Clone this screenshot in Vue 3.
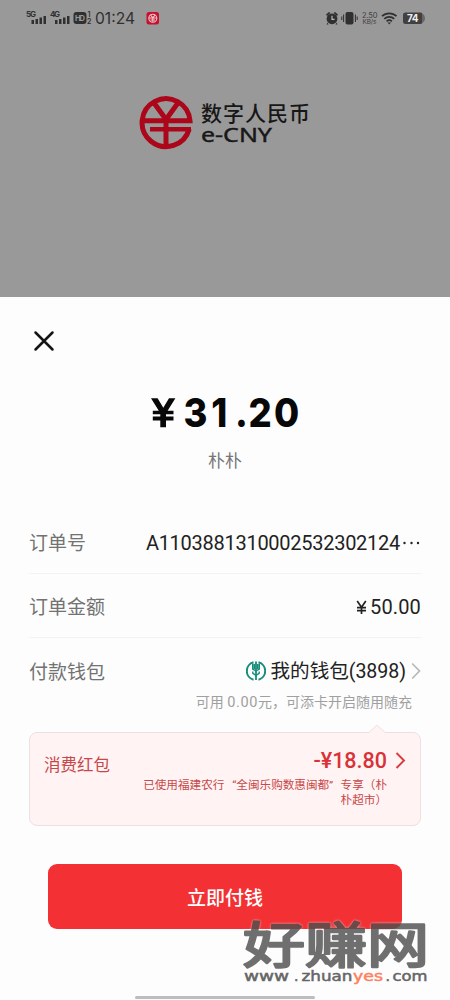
<script setup>
const signal = [4, 5, 6.5, 8]
const rows = [
  { label: '订单号', value: 'A1103881310002532302124', more: true },
  { label: '订单金额', value: '50.00', yen: true },
]
</script>

<template>
  <main class="screen">
    <header class="backdrop">
      <div class="status">
        <svg class="status-left" width="160" height="36" viewBox="0 0 160 36">
          <g class="ink">
            <text x="26" y="17" class="net" textLength="10">5G</text>
            <text x="50" y="17" class="net" textLength="10">4G</text>
            <rect v-for="(h, i) in signal" :key="'a' + i" :x="31.5 + i * 4" :y="24 - h" width="2.5" :height="h" />
            <rect v-for="(h, i) in signal" :key="'b' + i" :x="55 + i * 4" :y="24 - h" width="2.5" :height="h" />
            <rect x="73.5" y="12" width="13" height="12" rx="3" />
            <text x="75" y="20.8" class="hd" textLength="10">HD</text>
            <text x="87.500" y="16.8" class="sim">1</text>
            <text x="87" y="24.2" class="sim">2</text>
            <text x="95" y="24.4" class="clock" textLength="40" lengthAdjust="spacingAndGlyphs">01:24</text>
          </g>
          <rect x="146.500" y="12" width="12.500" height="12.500" rx="2.500" fill="#c8102e" />
          <g fill="none" stroke="#e9c9cd" stroke-width="1.100">
            <circle cx="152.800" cy="18.200" r="4" />
            <path d="M150.500 15.200l2.300 2.500 2.300-2.500M149 18h7.500M150.500 20h4.500M152.800 17.800v4" />
          </g>
        </svg>
        <svg class="status-right" width="110" height="36" viewBox="320 0 110 36">
          <g fill="#303030">
            <circle cx="332" cy="18.800" r="5.400" />
            <path d="M326 14.500l3-2.500 1.500 1-3.500 3zM338 14.500l-3-2.500-1.500 1 3.500 3z" />
            <path d="M327.500 22.500l-1 2h2zM336.500 22.500l1 2h-2z" />
            <rect x="345.500" y="12" width="8" height="12.500" rx="2" />
          </g>
          <path d="M332 15.800v3.500h2.500" fill="none" stroke="#bbb" stroke-width="1.200" />
          <path d="M343.600 14.500v7.500M341.800 16.500v3.500M355.400 14.500v7.500M357.200 16.500v3.500" stroke="#303030" stroke-width="1" />
          <text x="362" y="17.600" class="rate" textLength="15.500">2.50</text>
          <text x="362.500" y="24.300" class="rate unit" textLength="14">KB/s</text>
          <g fill="none" stroke="#303030" stroke-width="1.700">
            <path d="M382 16.200a10.500 10.500 0 0 1 14.500 0" />
            <path d="M384.300 18.900a7.200 7.200 0 0 1 9.900 0" />
            <path d="M386.600 21.400a4 4 0 0 1 5.300 0" />
          </g>
          <path d="M387.500 22.500h3.500l-1.750 2z" fill="#303030" />
          <path d="M405.500 12.500h15q2 0 2 2v7.500q0 2-2 2h-15q-2.500 0-2.500-2.500v-6.500q0-2.500 2.500-2.500z" fill="#404040" />
          <path d="M422.500 13.500q2.500 1.500 2.500 4.700t-2.500 4.700z" fill="#666" />
          <text x="407" y="22.200" class="battery" textLength="11.500">74</text>
        </svg>
      </div>
      <svg class="brand" width="176" height="60" viewBox="138 92 176 60">
        <g fill="none" stroke="#ac061a">
          <path d="M189.200 129A24 24 0 1 1 190 120.800H142.500" stroke-width="5" />
          <path d="M153 101.500L166 119.500 179 101.500M166 119v26" stroke-width="5" />
          <path d="M150 129.200h41" stroke-width="4.600" />
        </g>
        <text x="201" y="121" class="brand-cn" textLength="109">数字人民币</text>
        <text x="201" y="141.500" class="brand-en" textLength="71" lengthAdjust="spacingAndGlyphs">e-CNY</text>
      </svg>
    </header>

    <section class="sheet">
      <button class="close" aria-label="关闭">
        <svg width="22" height="22" viewBox="0 0 22 22"><path d="M2.500 2.500l17 17M19.500 2.500l-17 17" stroke="#151515" stroke-width="2.500" stroke-linecap="round" /></svg>
      </button>
      <svg class="amount" width="164" height="60" viewBox="143 382 164 60">
        <path d="M151 398.300h6.600l5.700 9.500 5.700-9.500h6.400l-7.800 12.400h5.900v3.600h-7.500v2.300h7.500v3.800h-7.500v6.800h-5.700v-6.800h-7.500v-3.800h7.500v-2.300h-7.500v-3.600h6z" fill="#080808" />
        <text transform="translate(183.500 427.300) scale(.91 1)" x="0 30.500 56.500 71.500 99.500">31.20</text>
      </svg>
      <p class="merchant">朴朴</p>

      <div class="details">
        <div v-for="row in rows" :key="row.label" class="row">
          <span class="label">{{ row.label }}</span>
          <span class="value" :class="{ serial: row.more, money: row.yen }">
            <svg v-if="row.yen" class="yen" width="11" height="15" viewBox="0 0 11 15"><path d="M1.200 1l4.300 6.200L9.800 1M1 7.700h9M1 10.700h9M5.500 7v7" fill="none" stroke="#222" stroke-width="1.700" /></svg>{{ row.value }}<svg v-if="row.more" class="dots" width="20" height="4" viewBox="0 0 20 4"><g fill="#222"><circle cx="3.500" cy="2" r="1.200" /><circle cx="10.500" cy="2" r="1.200" /><circle cx="17" cy="2" r="1.200" /></g></svg>
          </span>
        </div>
        <div class="row wallet">
          <span class="label">付款钱包</span>
          <span class="value">
            <svg class="bank" width="20" height="20" viewBox="0 0 20 20">
              <g fill="none" stroke="#168c7b">
                <path d="M7.500 1.300A9 9 0 0 0 7.500 18.700M12.500 1.300A9 9 0 0 1 12.500 18.700" stroke-width="2" />
                <path d="M10 .5V19" stroke-width="1.800" />
                <path d="M6.700 2.500v5.500l3.300 2 3.300-2V2.500M8.300 3v5M11.700 3v5M6.800 10.500v1.800l3.200 2 3.200-2v-1.800" stroke-width="1.400" />
              </g>
            </svg>
            <span class="wallet-name">我的钱包(3898)</span>
            <svg class="chevron" width="10" height="18" viewBox="0 0 10 18"><path d="M1.200 1.500L8.500 9l-7.300 7.500" fill="none" stroke="#b8b8b8" stroke-width="1.700" /></svg>
          </span>
        </div>
      </div>
      <p class="hint">可用 <span class="balance">0.00</span>元，可添卡开启随用随充</p>

      <div class="coupon">
        <svg class="pointer" width="18" height="10" viewBox="0 0 18 10"><path d="M1 8.500L9 1l8 7.500v1.500H1z" fill="#fff4f3" /><path d="M1 8.500L9 1l8 7.500" fill="none" stroke="#eedfe0" /></svg>
        <span class="coupon-title">消费红包</span>
        <div class="coupon-info">
          <div class="discount">-¥18.80</div>
          <p>已使用福建农行<span class="open">“</span>全闽乐购数惠闽都<span class="shut">”</span>专享（朴<br>朴超市）</p>
        </div>
        <svg class="go" width="11" height="17" viewBox="0 0 11 17"><path d="M1.500 1l7.500 7.500L1.500 16" fill="none" stroke="#d83a3e" stroke-width="1.900" /></svg>
      </div>

      <button class="pay">立即付钱</button>
      <div class="home"></div>
    </section>

    <svg class="watermark" width="215" height="100" viewBox="235 900 215 100">
      <g class="site-cn">
        <text x="243" y="962.500" textLength="186" lengthAdjust="spacingAndGlyphs">好赚网</text>
      </g>
      <g class="site-url">
        <text x="244" y="981" textLength="45" lengthAdjust="spacingAndGlyphs">www</text>
        <text x="294" y="981">.</text>
        <text x="301.500" y="981" textLength="51" lengthAdjust="spacingAndGlyphs">zhuan</text>
        <text x="353" y="981" class="yes" textLength="30" lengthAdjust="spacingAndGlyphs">yes</text>
        <text x="385.500" y="981">.</text>
        <text x="392.500" y="981" textLength="35" lengthAdjust="spacingAndGlyphs">com</text>
      </g>
    </svg>
  </main>
</template>

<style>
body { margin: 0; background: #fdfdfd; }
</style>

<style scoped>
.screen {
  position: relative;
  width: 450px;
  height: 1000px;
  overflow: hidden;
  background: #fdfdfd;
  color: #222;
  font-family: Roboto, "Noto Sans CJK SC", sans-serif;
}
p { margin: 0; }
svg { display: block; flex: none; }
button { padding: 0; border: 0; background: none; font-family: inherit; }
.backdrop { height: 297px; background: #999; }
.status { display: flex; justify-content: space-between; height: 36px; padding-right: 20px; }
.ink { fill: #303030; }
.net { font: 700 8px Inter, sans-serif; }
.hd { font: 700 7.5px Inter, sans-serif; fill: #999; }
.sim { font: 600 7px Inter, sans-serif; }
.clock { font: 400 16px Inter, sans-serif; }
.rate { font: 400 7.5px Inter, sans-serif; fill: #404040; }
.unit { font-size: 6.5px; }
.battery { font: 700 10px Inter, sans-serif; fill: #eee; }
.brand { margin: 56px 0 0 138px; }
.brand-cn { font: 500 21px "Noto Sans CJK SC", sans-serif; fill: #171717; }
.brand-en { font: 400 19px "Noto Sans", sans-serif; fill: #171717; stroke: #171717; stroke-width: .4; }

.sheet { display: flex; flex-direction: column; height: 703px; padding: 0 29px; }
.close { width: 22px; height: 22px; margin: 33px 0 0 3.5px; }
.amount { margin: 30px 0 0 114px; }
.amount text { font: 800 40px Inter, sans-serif; fill: #080808; }
.merchant { height: 24px; margin-top: 7px; text-align: center; font-size: 17px; line-height: 24px; color: #777; }
.details { margin-top: 37px; }
.row { display: flex; justify-content: space-between; align-items: center; box-sizing: border-box; height: 64px; padding-top: 3px; border-bottom: 1px solid #f3f3f3; }
.wallet { border-bottom: 0; }
.label { padding-top: 2px; font-size: 19px; line-height: 28px; color: #727272; }
.value { display: flex; align-items: center; font-size: 20px; line-height: 28px; letter-spacing: -.15px; }
.serial { letter-spacing: -.27px; }
.money { letter-spacing: .15px; }
.yen { margin-right: 3px; }
.dots { margin-left: 1px; }
.wallet .value { padding-bottom: 2px; }
.bank { margin-right: 5px; }
.wallet-name { padding-top: 3px; font-size: 19.6px; letter-spacing: -.05px; }
.chevron { margin-left: 5px; }
.hint { height: 20px; margin: -10px 9px 0 0; text-align: right; font-size: 14px; line-height: 20px; color: #a0a0a0; white-space: nowrap; }
.balance { font-size: 14.5px; letter-spacing: .6px; }
.coupon { position: relative; display: flex; box-sizing: border-box; height: 94px; margin-top: 20px; border: 1px solid #eedfe0; border-radius: 8px; background: #fff4f3; color: #c7474a; }
.pointer { position: absolute; top: -9px; left: 338px; }
.coupon-title { padding: 21px 0 0 14px; font-size: 16.5px; line-height: 24px; }
.coupon-info { flex: 1; padding-top: 15px; text-align: right; white-space: nowrap; }
.discount { font-size: 21.5px; line-height: 26px; font-weight: 500; color: #d83238; }
.coupon-info p { margin-top: 4px; font-size: 11.6px; line-height: 14.5px; }
.open { display: inline-block; width: 12px; text-align: right; }
.shut { display: inline-block; width: 11.5px; text-align: left; }
.go { margin: 19px 14px 0 8px; }
.pay { flex: none; height: 65px; margin: 38px 19px 0; padding-top: 4px; border-radius: 9px; background: #f33033; color: #fff; font-size: 19px; font-weight: 500; line-height: 61px; }
.home { width: 180px; height: 3px; margin: 66.500px auto 0; border-radius: 2px; background: #bdbdbd; }

.watermark { position: absolute; left: 235px; top: 900px; }
.site-cn { opacity: .82; filter: drop-shadow(0 0 1px rgba(255, 255, 255, .8)); }
.site-cn text { font: 400 49px "Noto Sans CJK SC", sans-serif; fill: #505050; stroke: #505050; stroke-width: 2.4px; stroke-linejoin: round; }
.site-url { font: 400 14px "DejaVu Sans", sans-serif; fill: #666; stroke: #666; stroke-width: .5px; }
.site-url .yes { fill: #ff805f; stroke: #ff805f; }
</style>
